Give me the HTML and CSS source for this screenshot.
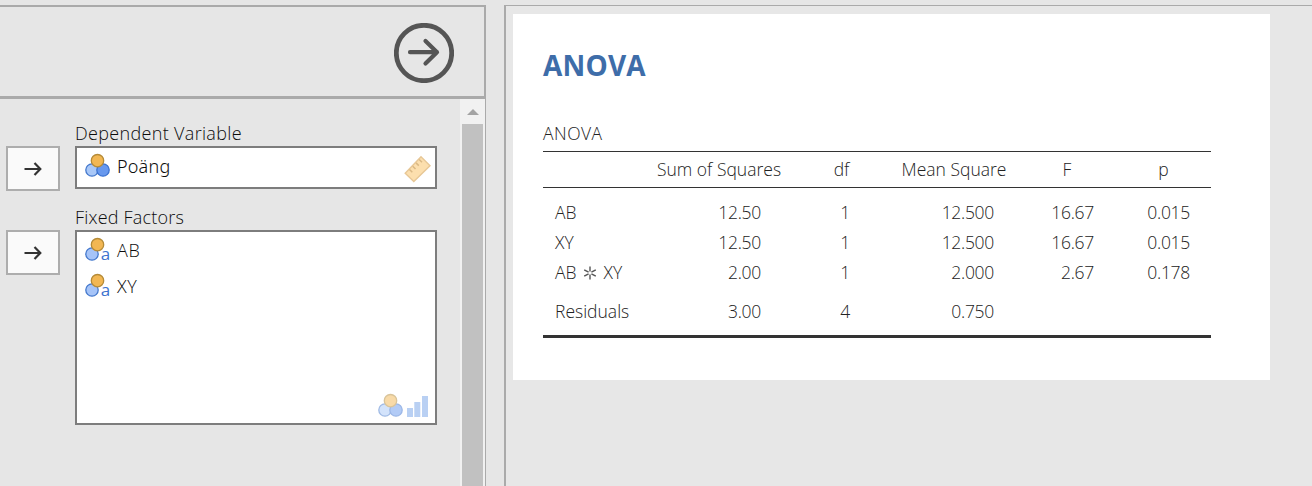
FILE: index.html
```html
<!DOCTYPE html>
<html lang="en">
<head>
<meta charset="utf-8">
<title>ANOVA</title>
<link rel="stylesheet" href="styles.css">
</head>
<body>
<svg class="defs" width="0" height="0">
  <symbol id="nominal" viewBox="0 0 26 26">
    <circle cx="8" cy="17" r="6.2" fill="#a9c8f8" stroke="#4478cc" stroke-width="1.3"/>
    <circle cx="19" cy="17" r="6.2" fill="#6798ee" stroke="#3b72d0" stroke-width="1.3"/>
    <circle cx="13.5" cy="7.7" r="6.2" fill="#f2b753" stroke="#b58b38" stroke-width="1.3"/>
  </symbol>
  <symbol id="nominal-pair" viewBox="0 0 26 26">
    <circle cx="8" cy="17" r="6.2" fill="#a6c4f8" stroke="#4478cc" stroke-width="1.3"/>
    <circle cx="13.5" cy="7.7" r="6.2" fill="#f2b753" stroke="#b58b38" stroke-width="1.3"/>
  </symbol>
  <symbol id="arrow" viewBox="0 0 20 16">
    <path d="M1.5 8H17M11.5 2L17.3 8L11.5 14" fill="none" stroke="#333" stroke-width="2.2"/>
  </symbol>
</svg>
<div class="app">
  <section class="options">
    <header class="options-header">
      <svg class="go" viewBox="0 0 60 60">
        <circle cx="30" cy="30" r="27.7" fill="none" stroke="#555" stroke-width="4.8"/>
        <path d="M16 29.2H43M31.5 18L43 29.2L31.5 40.6" fill="none" stroke="#555" stroke-width="4.2" stroke-linecap="round" stroke-linejoin="round"/>
      </svg>
    </header>
    <div class="options-body">
      <div class="fields">
        <div class="field">
          <button class="assign"><svg viewBox="0 0 20 16"><use href="#arrow"/></svg></button>
          <div class="target">
            <div class="label dependent">Dependent Variable</div>
            <div class="box single">
              <div class="item"><svg class="vicon"><use href="#nominal"/></svg><span class="name">Poäng</span></div>
              <div class="allowed measure"><svg class="ruler" viewBox="0 0 28 28">
                <path d="M1.2 18.3L17 1.8L26 10.7L9.8 26.5Z" fill="#fcdfae" stroke="#e7c796" stroke-width="1.4"/>
                <path d="M5.5 14.5L8.3 17.2M8.7 11.2L11.5 14M12 7.9L14.8 10.6M15.2 4.5L18 7.2" stroke="#dab985" stroke-width="1.5"/>
              </svg></div>
            </div>
          </div>
        </div>
        <div class="field">
          <button class="assign"><svg viewBox="0 0 20 16"><use href="#arrow"/></svg></button>
          <div class="target">
            <div class="label fixed">Fixed Factors</div>
            <div class="box list">
              <div class="item"><svg class="vicon" viewBox="0 0 26 26"><use href="#nominal-pair"/><text x="16.7" y="23" class="glyph">a</text></svg><span>AB</span></div>
              <div class="item"><svg class="vicon" viewBox="0 0 26 26"><use href="#nominal-pair"/><text x="16.7" y="23" class="glyph">a</text></svg><span>XY</span></div>
              <div class="allowed"><svg class="vicon faded"><use href="#nominal"/></svg><svg class="bars" viewBox="0 0 22 22"><path d="M0 13h6v9H0zM7.3 7h6v15h-6zM15 1h6v21h-6z" fill="#b9d0f3"/></svg></div>
            </div>
          </div>
        </div>
      </div>
      <div class="scrollbar"><svg class="up" viewBox="0 0 12 6"><path d="M0 6L6 0L12 6Z" fill="#a3a3a3"/></svg><div class="thumb"></div></div>
    </div>
  </section>
  <section class="results">
    <article class="page">
      <h1>ANOVA</h1>
      <table>
        <caption>ANOVA</caption>
        <colgroup><col class="c-name"><col class="c-ss"><col class="c-df"><col class="c-ms"><col class="c-f"><col class="c-p"></colgroup>
        <thead><tr><th></th><th>Sum of Squares</th><th>df</th><th>Mean Square</th><th>F</th><th>p</th></tr></thead>
        <tbody>
          <tr class="first"><td>AB</td><td>12.50</td><td>1</td><td>12.500</td><td>16.67</td><td>0.015</td></tr>
          <tr><td>XY</td><td>12.50</td><td>1</td><td>12.500</td><td>16.67</td><td>0.015</td></tr>
          <tr><td>AB <svg class="times" viewBox="0 0 14 14"><path d="M7 .5V5.6M7 8.4V13.5M1.2 3.8L5.6 6.2M8.4 7.8L12.8 10.2M12.8 3.8L8.4 6.2M5.6 7.8L1.2 10.2" stroke="#555" stroke-width="1.4"/></svg> XY</td><td>2.00</td><td>1</td><td>2.000</td><td>2.67</td><td>0.178</td></tr>
          <tr class="last"><td>Residuals</td><td>3.00</td><td>4</td><td>0.750</td><td></td><td></td></tr>
        </tbody>
      </table>
    </article>
  </section>
</div>
</body>
</html>
```
FILE: styles.css
```css
* { box-sizing: border-box; }
body {
  margin: 0;
  background: #e6e6e6;
  font: 350 17.5px/24px "Open Sans", "Noto Sans", sans-serif;
  color: #0c0c0c;
  overflow: hidden;
}
svg { display: block; flex: none; }
.defs { position: absolute; }
.app { display: flex; gap: 18px; height: 486px; padding-top: 5px; }

.options { width: 486px; display: flex; flex-direction: column; }
.options-header {
  height: 94px;
  display: flex;
  justify-content: flex-end;
  padding: 16px 30px 0 0;
  border: solid #aaa;
  border-width: 2px 2px 3px 0;
}
.go { width: 60px; height: 60px; }
.options-body { flex: 1; display: flex; border-right: 1px solid #aaa; }
.fields { flex: 1; padding: 22px 0 0 6px; display: flex; flex-direction: column; gap: 16px; }
.field { display: flex; gap: 15px; height: 68px; }
.assign {
  width: 54px;
  height: 45px;
  margin: 25px 0 0;
  padding: 0;
  display: grid;
  place-items: center;
  background: #fafafa;
  border: 2px solid #adadad;
}
.assign svg { width: 20px; height: 16px; }
.target { width: 362px; font-size: 18px; }
.label { height: 25px; line-height: 25px; white-space: nowrap; }
.dependent { letter-spacing: .33px; }
.fixed { letter-spacing: .2px; }
.box { position: relative; background: #fff; border: 2px solid #7d7d7d; padding: 0 7px; }
.single { height: 43px; }
.list { height: 195px; }
.item { height: 36px; display: flex; align-items: center; gap: 7px; letter-spacing: .6px; }
.name { font-family: "Noto Sans", sans-serif; font-weight: 300; letter-spacing: .2px; }
.vicon { width: 26px; height: 26px; overflow: visible; }
.glyph { font: 400 17px "Open Sans", sans-serif; letter-spacing: 0; fill: #3d74cf; }
.allowed { position: absolute; right: 6px; bottom: 4px; display: flex; align-items: flex-end; gap: 4px; }
.measure { right: 3px; }
.ruler { width: 28px; height: 28px; }
.faded { opacity: .5; }
.bars { width: 22px; height: 22px; margin-bottom: 2px; }
.scrollbar { width: 25px; background: #f1f1f1; display: flex; flex-direction: column; align-items: center; }
.up { width: 12px; height: 6px; margin: 10px 0 9px; }
.thumb { width: 21px; flex: 1; background: #c1c1c1; }

.results { flex: 1; border: solid #aaa; border-width: 1px 0 0 2px; padding: 8px 0 0 7px; background: #e7e7e7; }
.page { width: 757px; height: 366px; background: #fff; padding: 33px 30px 0; color: #222; }
h1 { margin: 0; font: 700 28px/36px "Open Sans", sans-serif; letter-spacing: .2px; color: #3e6da9; }
table { width: 668px; margin-top: 38px; table-layout: fixed; border-collapse: separate; border-spacing: 0; border-bottom: 3px solid #333; }
caption { text-align: left; height: 30px; line-height: 24px; letter-spacing: .5px; }
.c-name { width: 102px; }
.c-ss { width: 148px; }
.c-df { width: 97px; }
.c-ms { width: 128px; }
.c-f { width: 98px; }
.c-p { width: 95px; }
th { height: 37px; padding: 0 0 2px; font-weight: 350; white-space: nowrap; border: solid #333; border-width: 1px 0; }
td { height: 30px; padding: 0; text-align: right; white-space: nowrap; letter-spacing: -.3px; }
td:nth-child(1) { text-align: left; padding-left: 12px; letter-spacing: 0; }
td:nth-child(2) { padding-right: 32px; }
td:nth-child(3) { padding-right: 40px; }
td:nth-child(4) { padding-right: 24px; }
td:nth-child(5) { padding-right: 22px; }
td:nth-child(6) { padding-right: 21px; }
.first td { height: 39px; padding-top: 9px; }
.last td { height: 48px; }
.times { display: inline-block; width: 14px; height: 14px; margin: 0 2px; vertical-align: -1px; }
```
